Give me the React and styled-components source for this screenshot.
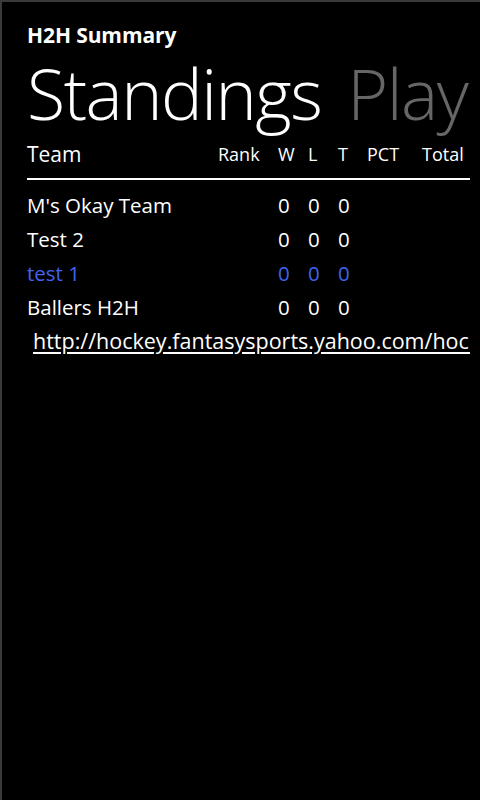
import React from "react";
import styled, { createGlobalStyle } from "styled-components";

const teams = [
	{ name: "M's Okay Team", w: 0, l: 0, t: 0 },
	{ name: "Test 2", w: 0, l: 0, t: 0 },
	{ name: "test 1", w: 0, l: 0, t: 0, mine: true },
	{ name: "Ballers H2H", w: 0, l: 0, t: 0 },
];

const App = () => {
	return (
		<Screen>
			<GlobalStyle />
			<AppTitle>H2H Summary</AppTitle>
			<Pivot>
				<PivotItem>Standings</PivotItem>
				<PivotItem muted>Play</PivotItem>
			</Pivot>
			<Table>
				<HeadRow>
					<HeadCell size="21px">Team</HeadCell>
					<HeadCell>Rank</HeadCell>
					<HeadCell>W</HeadCell>
					<HeadCell>L</HeadCell>
					<HeadCell>T</HeadCell>
					<HeadCell>PCT</HeadCell>
					<HeadCell>Total</HeadCell>
				</HeadRow>
				<Rows>
					{teams.map((team) => (
						<Row key={team.name} mine={team.mine}>
							<Cell>{team.name}</Cell>
							<Cell />
							<Cell>{team.w}</Cell>
							<Cell>{team.l}</Cell>
							<Cell>{team.t}</Cell>
							<Cell />
							<Cell />
						</Row>
					))}
				</Rows>
			</Table>
			<LinkText>http://hockey.fantasysports.yahoo.com/hockey/</LinkText>
		</Screen>
	);
};

export default App;

const GlobalStyle = createGlobalStyle`
	html, body {
		margin: 0;
		padding: 0;
		background: #000;
	}
	* {
		box-sizing: border-box;
	}
`;

const Screen = styled.div`
	width: 480px;
	height: 800px;
	background: #000;
	border-left: 2px solid #3a3a3a;
	border-top: 2px solid #3a3a3a;
	padding: 20px 10px 0 25px;
	color: #fff;
	font-family: "Open Sans", "Noto Sans", sans-serif;
	overflow: hidden;
	display: flex;
	flex-direction: column;
`;

const AppTitle = styled.div`
	font-size: 21px;
	font-weight: 700;
	line-height: 26px;
	letter-spacing: -0.1px;
`;

const Pivot = styled.div`
	display: flex;
	gap: 26px;
	white-space: nowrap;
	margin-top: 10px;
	height: 70px;
`;

const PivotItem = styled.div`
	font-size: 70px;
	font-weight: 300;
	line-height: 70px;
	letter-spacing: -1.5px;
	color: ${(p) => (p.muted ? "#666666" : "#ffffff")};
`;

const Table = styled.div`
	display: flex;
	flex-direction: column;
	margin-top: 10px;
`;

const HeadRow = styled.div`
	display: grid;
	grid-template-columns: 191px 60px 30px 30px 29px 55px 48px;
	align-items: end;
	height: 42px;
	border-bottom: 2px solid #fff;
	padding-bottom: 12px;
`;

const HeadCell = styled.div`
	font-size: ${(p) => p.size || "18px"};
	line-height: 24px;
	white-space: nowrap;
`;

const Rows = styled.div`
	display: flex;
	flex-direction: column;
	padding-top: 8px;
`;

const Row = styled.div`
	display: grid;
	grid-template-columns: 191px 60px 30px 30px 29px 55px 48px;
	height: 34px;
	align-items: center;
	color: ${(p) => (p.mine ? "#4163ee" : "#ffffff")};
`;

const Cell = styled.div`
	font-size: 20.5px;
	line-height: 26px;
	white-space: nowrap;
`;

const LinkText = styled.div`
	margin-left: 6px;
	margin-top: 2px;
	width: 437px;
	font-size: 21.5px;
	line-height: 30px;
	text-decoration: underline;
	text-underline-offset: 3px;
	white-space: nowrap;
	overflow: hidden;
`;
